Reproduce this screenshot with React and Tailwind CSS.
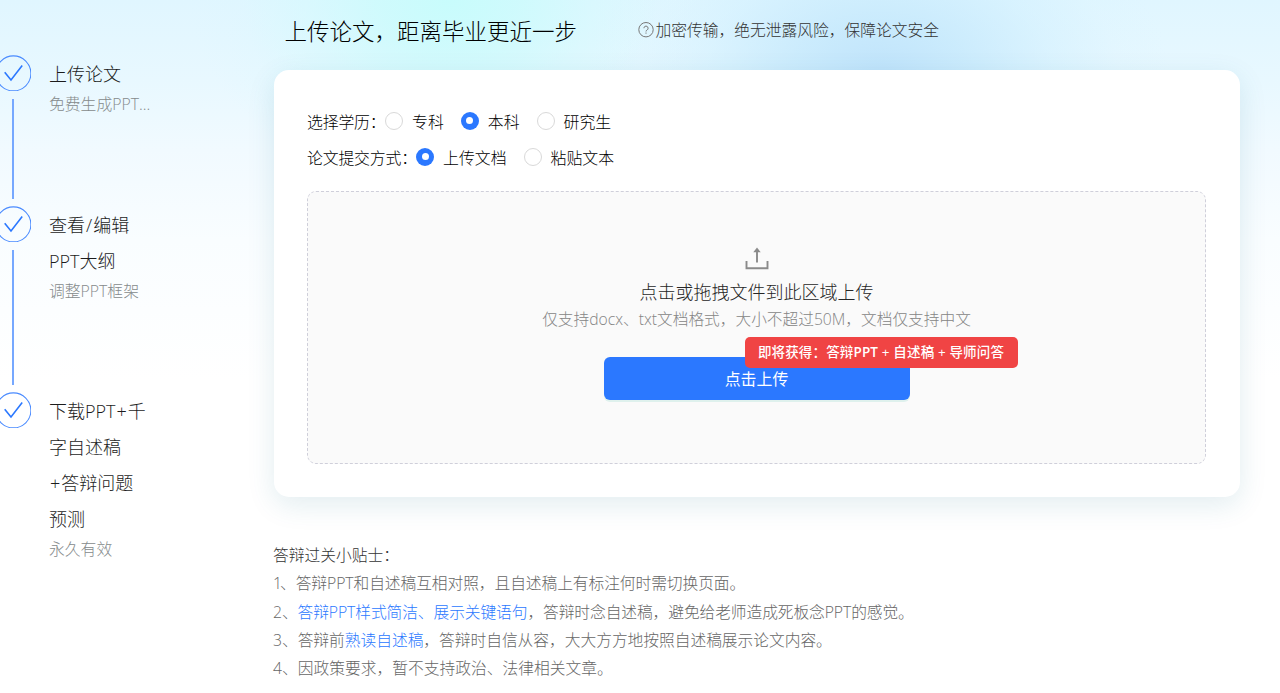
import React from "react";

const steps = [
  { title: ["上传论文"], note: "免费生成PPT...", height: "h-[151px]" },
  { title: ["查看/编辑", "PPT大纲"], note: "调整PPT框架", height: "h-[186px]" },
  { title: ["下载PPT+千", "字自述稿", "+答辩问题", "预测"], note: "永久有效", height: "h-[186px]" },
];

function StepLine({ text }) {
  return (
    <div>
      {text.split(/([+/])/).map((part, i) =>
        part === "+" || part === "/" ? (
          <span key={i} className="px-px">{part}</span>
        ) : (
          part
        )
      )}
    </div>
  );
}

function Step({ title, note, height, last }) {
  return (
    <li className={`flex ${height}`}>
      <div className="-ml-[5px] flex w-9 shrink-0 flex-col items-center">
        <svg className="h-9 w-9 shrink-0" viewBox="0 0 36 36" fill="none" stroke="#2b78ff">
          <circle cx="18.4" cy="18.4" r="17.5" strokeWidth="1.1" stroke="#4a8bff" />
          <path d="M9.7 17.2 L16 25 L27.2 10.6" strokeWidth="1.6" />
        </svg>
        {!last && <div className="mt-[8px] mb-[7px] w-[2px] flex-1 bg-[#76a8ff]" />}
      </div>
      <div className="ml-[18px]">
        <div className="pt-px text-[18px] leading-9 text-[#1c1c1c]">
          {title.map((line) => (
            <StepLine key={line} text={line} />
          ))}
        </div>
        <div className="text-[15.8px] leading-6 text-[#858a8b]">{note}</div>
      </div>
    </li>
  );
}

function Radio({ checked, label }) {
  return (
    <label className="flex items-center">
      {checked ? (
        <span className="flex h-[18px] w-[18px] items-center justify-center rounded-full bg-[#2b78ff]">
          <span className="h-[7px] w-[7px] rounded-full bg-white" />
        </span>
      ) : (
        <span className="h-[18px] w-[18px] rounded-full border border-[#d9d9d9] bg-white" />
      )}
      <span className="mt-[4px] ml-[9px]">{label}</span>
    </label>
  );
}

export default function App() {
  return (
    <div
      lang="zh-CN"
      className="flex h-[693px] w-[1280px] overflow-hidden bg-[radial-gradient(ellipse_260px_190px_at_450px_0px,#c8fcfc_0%,#cbfbfcd8_25%,#d2fafd80_55%,#daf7fe30_80%,#e2f6ff00_100%),radial-gradient(ellipse_290px_190px_at_880px_75px,#bfe3fb_0%,#c4e8fcc8_30%,#cdeefe70_60%,#d8f2fe28_82%,#e2f6ff00_100%),linear-gradient(180deg,#e0f6ff_0px,#e8f8ff_80px,#f1faff_150px,#f9fdff_240px,#ffffff_380px)] font-['Open_Sans','Noto_Sans_CJK_SC',sans-serif] font-light whitespace-nowrap"
    >
      <ol className="w-[274px] shrink-0 pt-[55px]">
        {steps.map((step, i) => (
          <Step key={step.note} {...step} last={i === steps.length - 1} />
        ))}
      </ol>

      <main className="w-[966px]">
        <header className="flex h-[70px] items-start pl-[10.5px]">
          <h1 className="mt-[12px] w-[353px] text-[22.5px] leading-10 text-black">上传论文，距离毕业更近一步</h1>
          <p className="mt-[20px] flex items-center text-[15.75px] leading-5 text-[#333]">
            <svg className="mr-[2px] h-4 w-4" viewBox="0 0 16 16" fill="none" stroke="#777" strokeWidth="1">
              <circle cx="8" cy="7.7" r="7.2" />
              <path d="M5.9 6.2a2.1 2.1 0 1 1 3.2 1.8c-.8.4-1.1.8-1.1 1.5M8 10.5v1.2" />
            </svg>
            加密传输，绝无泄露风险，保障论文安全
          </p>
        </header>

        <section className="h-[427px] rounded-[15px] bg-white pr-[34px] pl-[33px] pt-[33px] shadow-[0_8px_28px_rgba(20,110,130,0.12)]">
          <div className="flex h-9 items-center text-[15.9px] text-black">
            <span className="mt-[4px] w-[78px] tracking-[-0.2px]">选择学历：</span>
            <div className="flex gap-[17px]">
              <Radio label="专科" />
              <Radio label="本科" checked />
              <Radio label="研究生" />
            </div>
          </div>
          <div className="flex h-9 items-center text-[15.9px] text-black">
            <span className="mt-[4px] w-[109px] tracking-[-0.2px]">论文提交方式：</span>
            <div className="flex gap-[17px]">
              <Radio label="上传文档" checked />
              <Radio label="粘贴文本" />
            </div>
          </div>

          <div className="mt-[16px] flex h-[273px] flex-col items-center rounded-[9px] border border-dashed border-[#cfcfda] bg-[#fafafa] pt-[55px]">
            <svg className="h-6 w-6" viewBox="0 0 24 24" fill="none" stroke="#8a8a8a" strokeWidth="1.9">
              <path d="M1.5 14v7.2h21V14" />
              <path d="M12 3.5V15.5" />
              <path d="M12 .6L15.7 5.2H8.3Z" fill="#8a8a8a" stroke="none" />
            </svg>
            <p className="mt-[7px] text-[18px] leading-7 text-[#262626]">点击或拖拽文件到此区域上传</p>
            <p className="text-[15.7px] leading-[27px] text-[#858585]">仅支持docx、txt文档格式，大小不超过50M，文档仅支持中文</p>
            <div className="relative mt-[24px]">
              <button className="block h-[43px] w-[306px] rounded-[6px] bg-[#2b78ff] pt-[2px] text-[15.9px] font-normal text-white shadow-[0_2px_0_#dff1ed]">
                点击上传
              </button>
              <span className="absolute -top-[20px] left-[141px] h-[31px] w-[273px] rounded-[5px] bg-[#f04444] text-center text-[13.5px] leading-[30px] font-medium tracking-[0.15px] text-white">
                即将获得：答辩<span className="font-semibold">PPT</span> + 自述稿 + 导师问答
              </span>
            </div>
          </div>
        </section>

        <section className="mt-[44px] text-[15.75px] leading-[28.35px] text-[#666]">
          <h2 className="-ml-px text-[#333]">答辩过关小贴士：</h2>
          <p className="-ml-px tracking-[-0.08px]">
            <span className="tracking-[-2px]">1</span>、答辩PPT和自述稿互相对照，且自述稿上有标注何时需切换页面。
          </p>
          <p className="-ml-px tracking-[-0.1px]">
            2、<span className="text-[#2b78ff]">答辩PPT样式简洁、展示关键语句</span>，答辩时念自述稿，避免给老师造成死板念PPT的感觉。
          </p>
          <p className="-ml-px tracking-[-0.04px]">
            3、答辩前<span className="text-[#2b78ff]">熟读自述稿</span>，答辩时自信从容，大大方方地按照自述稿展示论文内容。
          </p>
          <p className="-ml-px">4、因政策要求，暂不支持政治、法律相关文章。</p>
        </section>
      </main>
    </div>
  );
}
